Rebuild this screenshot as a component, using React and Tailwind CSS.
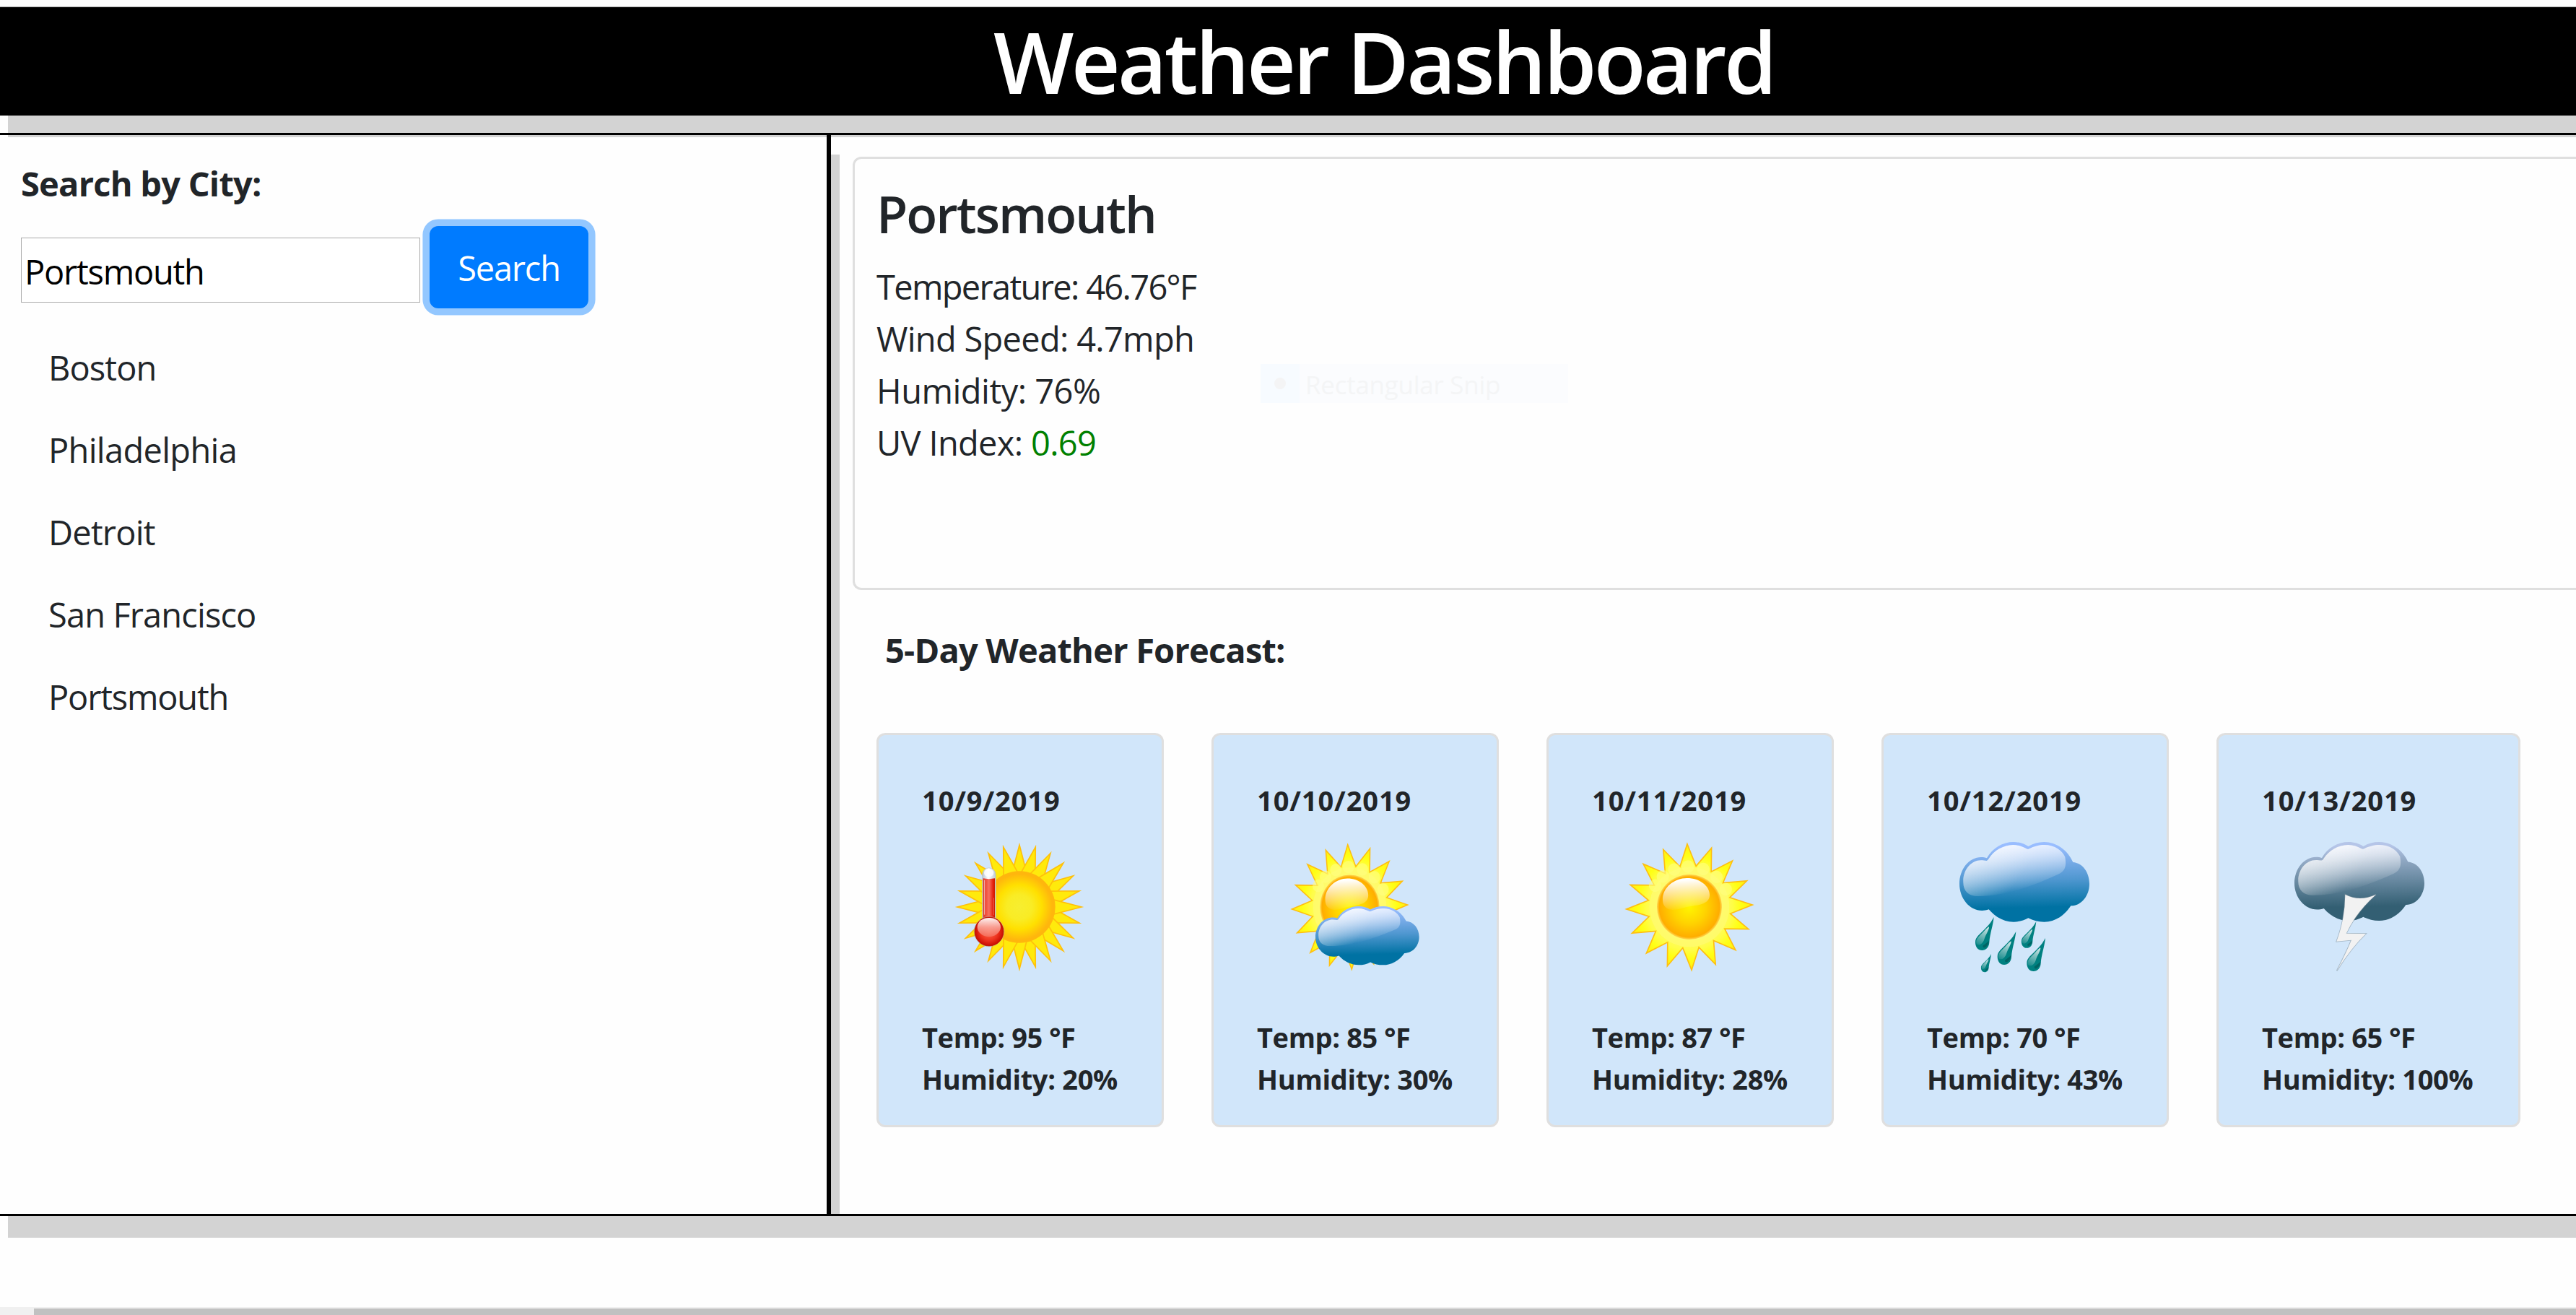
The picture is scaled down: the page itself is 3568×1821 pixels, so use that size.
import React from "react";

const CLOUD =
  "M246 175 C270 132 312 108 357 108 C380 108 402 115 418 126 C438 114 460 108 484 108 C535 108 582 142 604 192 C643 195 672 233 672 282 C672 332 638 374 595 373 C568 415 528 440 484 440 C460 440 438 434 418 424 C400 434 380 440 357 440 C318 440 282 421 254 388 C245 392 235 393 226 393 C174 393 132 342 132 282 C132 221 172 171 222 171 C231 171 239 172 246 175Z";
const CLOUD_GLOSS =
  "M148 275 C146 225 180 184 222 184 C229 184 237 186 245 186 Q250 184 254 177 C275 143 315 121 355 120 C377 120 395 127 411 136 Q416 139 422 136 C440 126 465 120 484 120 C530 120 560 145 571 170 C577 205 573 228 545 241 C450 285 330 333 210 333 C170 333 148 312 148 275Z";

function Cloud({ id, stops, transform }) {
  return (
    <g transform={transform}>
      <defs>
        <linearGradient id={id} gradientUnits="userSpaceOnUse" x1="400" y1="108" x2="408" y2="440">
          <stop offset="0.05" stopColor={stops[0]} />
          <stop offset="0.25" stopColor={stops[1]} />
          <stop offset="0.48" stopColor={stops[2]} />
          <stop offset="0.82" stopColor={stops[3]} />
        </linearGradient>
        <linearGradient id={id + "-gloss"} gradientUnits="userSpaceOnUse" x1="340" y1="110" x2="375" y2="312">
          <stop offset="0" stopColor="#fff" stopOpacity="0.88" />
          <stop offset="0.35" stopColor="#fff" stopOpacity="0.62" />
          <stop offset="1" stopColor="#fff" stopOpacity="0" />
        </linearGradient>
        <linearGradient id={id + "-edge"} gradientUnits="userSpaceOnUse" x1="150" y1="200" x2="330" y2="330">
          <stop offset="0" stopColor="#fff" stopOpacity="0.3" />
          <stop offset="1" stopColor="#fff" stopOpacity="0" />
        </linearGradient>
      </defs>
      <path d={CLOUD} fill={`url(#${id})`} />
      <path d={CLOUD_GLOSS} fill={`url(#${id}-gloss)`} />
      <path d={CLOUD_GLOSS} fill={`url(#${id}-edge)`} />
    </g>
  );
}

const BLUE = ["#99bdff", "#78abe8", "#4f97d0", "#0072a3"];
const STORM = ["#b5c5e8", "#8fa7c2", "#6b8ba3", "#335f73"];

function starPoints(n, outer, inner, rotate) {
  return Array.from({ length: n * 2 }, (_, i) => {
    const a = ((i * 180) / n + rotate) * (Math.PI / 180);
    const r = i % 2 ? inner : outer;
    return `${(Math.sin(a) * r).toFixed(1)},${(-Math.cos(a) * r).toFixed(1)}`;
  }).join(" ");
}

function Sun({ id, transform }) {
  return (
    <g transform={transform}>
      <defs>
        <radialGradient id={id + "-rays"} gradientUnits="userSpaceOnUse" cx="0" cy="0" r="262">
          <stop offset="0.5" stopColor="#fffb6a" />
          <stop offset="0.68" stopColor="#fffd48" />
          <stop offset="0.82" stopColor="#ffff14" />
          <stop offset="1" stopColor="#ffef10" />
        </radialGradient>
        <radialGradient id={id + "-disc"}>
          <stop offset="0" stopColor="#fff500" />
          <stop offset="0.5" stopColor="#ffd400" />
          <stop offset="0.93" stopColor="#ffad00" />
          <stop offset="1" stopColor="#ffb833" stopOpacity="0.55" />
        </radialGradient>
        <linearGradient id={id + "-gloss"} x1="0" y1="0" x2="0.08" y2="1">
          <stop offset="0.1" stopColor="#fff" />
          <stop offset="1" stopColor="#fff" stopOpacity="0.06" />
        </linearGradient>
      </defs>
      <polygon points={starPoints(16, 262, 172, -2)} fill={`url(#${id}-rays)`} stroke="#ffbf10" strokeWidth="5" strokeMiterlimit="10" />
      <circle r="166" fill="#fffb70" opacity="0.75" />
      {[-58, -41, -22, -2, 20, 42, 64].map((a) => (
        <circle key={a} cy="-168" r="26" fill="#ffff80" opacity="0.6" transform={`rotate(${a})`} />
      ))}
      <circle r="135" fill={`url(#${id}-disc)`} />
      <path d="M-111 -30 C-112 -82 -62 -120 -10 -120 C42 -120 84 -88 84 -50 C84 -12 40 -8 0 -2 C-30 4 -42 12 -70 12 C-98 10 -111 -6 -111 -30Z" fill={`url(#${id}-gloss)`} />
    </g>
  );
}

function HotIcon() {
  return (
    <>
      <defs>
        <radialGradient id="hot-disc">
          <stop offset="0" stopColor="#f7ee30" />
          <stop offset="0.35" stopColor="#f9ec25" />
          <stop offset="0.62" stopColor="#ffe000" />
          <stop offset="0.92" stopColor="#ffb60d" />
        </radialGradient>
        <linearGradient id="hot-tube">
          <stop offset="0" stopColor="#e03020" />
          <stop offset="0.2" stopColor="#ee4a38" />
          <stop offset="0.5" stopColor="#f67060" />
          <stop offset="0.85" stopColor="#e5200c" />
          <stop offset="1" stopColor="#cc1800" />
        </linearGradient>
        <linearGradient id="hot-cap">
          <stop offset="0" stopColor="#b9c6d2" />
          <stop offset="0.45" stopColor="#ffffff" />
          <stop offset="1" stopColor="#bccad6" />
        </linearGradient>
        <radialGradient id="hot-bulb" cx="0.5" cy="0.5" r="0.5">
          <stop offset="0" stopColor="#ff6a50" />
          <stop offset="0.6" stopColor="#ee3520" />
          <stop offset="1" stopColor="#c80c00" />
        </radialGradient>
        <linearGradient id="hot-shine" x1="0" y1="0" x2="0" y2="1">
          <stop offset="0" stopColor="#fff" stopOpacity="0.95" />
          <stop offset="0.5" stopColor="#f9a59a" stopOpacity="0.9" />
          <stop offset="1" stopColor="#f67a68" stopOpacity="0.7" />
        </linearGradient>
      </defs>
      <g transform="translate(396 378)">
        {Array.from({ length: 24 }, (_, i) => (
          <path key={i} d="M0 -258 L31 -138 H-31Z" fill="#ffea0c" stroke="#ffc00a" strokeWidth="5" transform={`rotate(${((i * 7) % 24) * 15})`} />
        ))}
        <circle r="149" fill="url(#hot-disc)" />
      </g>
      <path d="M242 430 V243 A27 27 0 0 1 297 243 V430Z" fill="url(#hot-cap)" stroke="#b6c0c8" strokeWidth="2" />
      <ellipse cx="269" cy="236" rx="20" ry="17" fill="#fff" opacity="0.8" />
      <path d="M245 259 Q269 264 294 259 V430 H245Z" fill="url(#hot-tube)" />
      <path d="M251 266 V410" stroke="#fff" strokeWidth="2.5" opacity="0.8" />
      <path d="M289 340 V412" stroke="#fff" strokeWidth="2" opacity="0.5" />
      <circle cx="270" cy="480" r="60" fill="url(#hot-bulb)" stroke="#c01808" strokeWidth="3" />
      <circle cx="270" cy="480" r="62.5" fill="none" stroke="#a8a8a0" strokeWidth="1.5" />
      <path d="M221 462 C221 437 245 423 270 423 C295 423 318 437 318 462 C318 485 292 502 270 502 C246 502 221 485 221 462Z" fill="url(#hot-shine)" />
    </>
  );
}

function PartlyCloudyIcon() {
  return (
    <>
      <Sun id="pc-sun" transform="translate(388.5 378) scale(0.917 0.99)" />
      <Cloud id="pc-cloud" stops={BLUE} transform="translate(140.7 295.6) scale(0.798 0.735)" />
    </>
  );
}

const DROPS = [
  "translate(275 420)",
  "translate(367 480)",
  "translate(451 438) scale(0.8)",
  "translate(489 507)",
  "translate(264 573) scale(0.55)",
];

function RainIcon() {
  return (
    <>
      <defs>
        <linearGradient id="drop-shine" gradientUnits="userSpaceOnUse" x1="-20" y1="40" x2="-60" y2="125">
          <stop offset="0" stopColor="#fff" stopOpacity="0.85" />
          <stop offset="1" stopColor="#fff" stopOpacity="0.05" />
        </linearGradient>
      </defs>
      <Cloud id="rain-cloud" stops={BLUE} />
      {DROPS.map((t) => (
        <g key={t} transform={t}>
          <path d="M0 0 C-4 40 -16 66 -19 105 C-20 125 -33 138 -49 138 C-66 138 -77 124 -77 104 C-77 82 -58 72 -36 48 C-20 32 -12 22 0 0Z" fill="#008080" />
          <path d="M-20 98 C-26 104 -36 112 -45 118 C-48 124 -43 130 -36 126 C-26 120 -21 110 -20 98Z" fill="#006464" />
          <path d="M-21 40 C-16 46 -34 74 -40 92 C-46 112 -62 120 -72 112 C-78 92 -62 80 -48 66 C-38 56 -30 46 -21 40Z" fill="url(#drop-shine)" />
        </g>
      ))}
    </>
  );
}

function StormIcon() {
  return (
    <>
      <Cloud id="storm-cloud" stops={STORM} transform="translate(12 1.6) scale(1 0.985)" />
      <path d="M355 326 Q415 358 483 326 Q400 400 359 488 L441 489 Q382 545 320 643 Q356 575 381 515 L319 521 Q354 430 355 326Z" fill="#8a9aa5" stroke="#7d8f9b" strokeWidth="5" opacity="0.55" />
      <path d="M355 326 Q415 358 483 326 Q400 400 359 488 L441 489 Q382 545 320 643 Q356 575 381 515 L319 521 Q354 430 355 326Z" fill="#f2f2f2" />
    </>
  );
}

const DAYS = [
  { date: "10/9/2019", temp: "95", humidity: "20%", viewBox: "126 108 540 540", icon: <HotIcon />, width: "w-[398px]" },
  { date: "10/10/2019", temp: "85", humidity: "30%", viewBox: "138 108 540 540", icon: <PartlyCloudyIcon />, width: "w-[398px]" },
  { date: "10/11/2019", temp: "87", humidity: "28%", viewBox: "150 108 540 540", icon: <Sun id="sun" transform="translate(420 378)" />, width: "w-[398px]" },
  { date: "10/12/2019", temp: "70", humidity: "43%", viewBox: "132 108 540 540", icon: <RainIcon />, width: "w-[398px]" },
  { date: "10/13/2019", temp: "65", humidity: "100%", viewBox: "144 108 540 540", icon: <StormIcon />, width: "w-[421px]" },
];

const CITIES = [
  { name: "Boston", tracking: "tracking-[-0.9px]" },
  { name: "Philadelphia", tracking: "tracking-[-0.7px]" },
  { name: "Detroit", tracking: "tracking-[-0.8px]" },
  { name: "San Francisco", tracking: "tracking-[-0.88px]" },
  { name: "Portsmouth", tracking: "tracking-[-1.2px]" },
];

function ForecastCard({ day }) {
  return (
    <article className={`${day.width} h-[546px] shrink-0 rounded-[12px] border-[3px] border-[#dfdfdf] bg-[#d1e6fa] pt-[61px] pl-[60px] text-[38px] leading-[58px] font-bold whitespace-nowrap`}>
      <p className="tracking-[0.9px]">{day.date}</p>
      <svg className="mt-[29px] ml-[45px] block size-[180px] overflow-visible" viewBox={day.viewBox}>
        {day.icon}
      </svg>
      <p className="mt-[61px] tracking-[-0.4px]">Temp: {day.temp} °F</p>
      <p className="tracking-[-0.32px]">Humidity: {day.humidity}</p>
    </article>
  );
}

function Sidebar() {
  return (
    <aside className="w-[1151px] shrink-0 border-r-[6px] border-black pt-[31px] pl-[29px] shadow-[12px_27px_0_#d3d3d3]">
      <label htmlFor="city" className="block leading-[72px] font-bold tracking-[-0.77px]">
        Search by City:
      </label>
      <div className="mt-[23px] flex items-start gap-[13px]">
        <input
          id="city"
          defaultValue="Portsmouth"
          className="mt-[16px] h-[90px] w-[553px] border border-[#a9a9a9] bg-white pt-[4px] pl-[4px] tracking-[-1.25px] text-black outline-none"
        />
        <button className="h-[114px] w-[220px] rounded-[12px] bg-[#007bff] pt-[3px] tracking-[-1.2px] text-white shadow-[0_0_0_9.6px_#93c7ff]">
          Search
        </button>
      </div>
      <ul className="mt-[25px] pl-[38px]">
        {CITIES.map((c) => (
          <li key={c.name} className={`h-[114px] leading-[114px] ${c.tracking}`}>
            {c.name}
          </li>
        ))}
      </ul>
    </aside>
  );
}

function CurrentWeather() {
  return (
    <section className="relative h-[600px] rounded-l-[12px] border-[3px] border-r-0 border-[#dfdfdf] pt-[33px] pl-[30px] leading-[72px]">
      <h2 className="mb-[22px] text-[70.5px] leading-[86px] font-semibold tracking-[-2px]">Portsmouth</h2>
      <p className="tracking-[-1.68px]">Temperature: 46.76°F</p>
      <p className="tracking-[-0.71px]">Wind Speed: 4.7mph</p>
      <p className="tracking-[-0.51px]">Humidity: 76%</p>
      <p className="tracking-[-0.68px]">
        UV Index: <span className="text-[#008000]">0.69</span>
      </p>
      <div className="absolute top-[284px] left-[562px] flex h-[54px] w-[426px] items-center bg-[#fbfcfe] text-[35px] leading-[54px] tracking-[-0.27px] text-[#f4f5f6]">
        <span className="flex h-full w-[54px] items-center justify-center bg-[#f7fbff]">
          <span className="size-[16px] rounded-full bg-[#f4f4f5]" />
        </span>
        <span className="pt-[3px] pl-[8px]">Rectangular Snip</span>
      </div>
    </section>
  );
}

export default function App() {
  return (
    <div className="h-[1821px] w-full overflow-hidden bg-[#fefefe] pt-[9px] font-['Open_Sans',sans-serif] text-[47px] text-[#212529]">
      <header className="h-[151px] border-t border-[#aaaaaa] bg-black pl-[1376px] shadow-[11px_30px_0_#d3d3d3]">
        <h1 className="text-[118px] leading-[150px] font-semibold tracking-[-3.71px] whitespace-nowrap text-white">Weather Dashboard</h1>
      </header>
      <div className="mt-[24px] h-[1500px] border-y-[3px] border-black shadow-[11px_30px_0_#d3d3d3]">
        <div className="flex h-full overflow-hidden">
          <Sidebar />
          <main className="min-w-0 grow pt-[30px] pl-[30px]">
            <CurrentWeather />
            <h3 className="mt-[47px] pl-[45px] leading-[72px] font-bold tracking-[-0.8px]">5-Day Weather Forecast:</h3>
            <div className="mt-[79px] flex pl-[33px]">
              {DAYS.map((d) => (
                <div key={d.date} className="w-[464px] shrink-0">
                  <ForecastCard day={d} />
                </div>
              ))}
            </div>
          </main>
        </div>
      </div>
      <div className="mt-[126px] h-[11px] bg-[#f0f0f0] pt-[2px] pl-[47px]">
        <div className="h-[9px] bg-[#c1c1c1]" />
      </div>
    </div>
  );
}
